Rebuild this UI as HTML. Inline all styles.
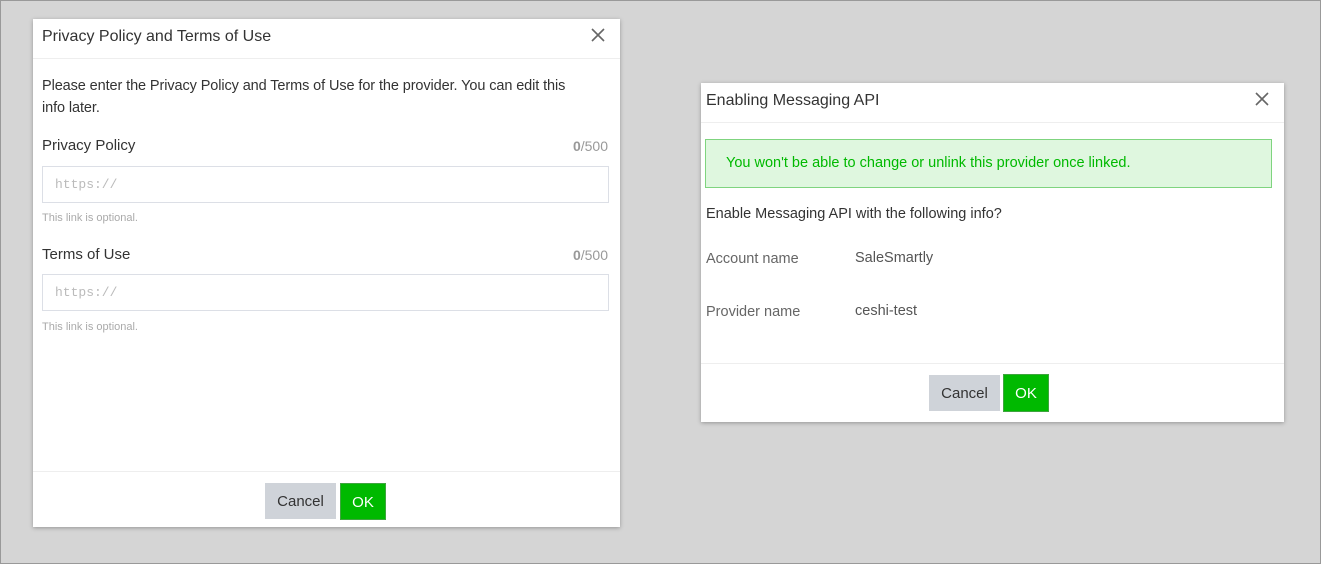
<!DOCTYPE html><html><head><style>
*{box-sizing:border-box;margin:0;padding:0}
body{width:1321px;height:564px;background:#d5d5d5;font-family:"Liberation Sans",sans-serif;position:relative;overflow:hidden;box-shadow:inset 0 0 0 1px #999;}
.dlg{position:absolute;background:#fff;box-shadow:0 1px 4px rgba(0,0,0,.3)}
.hd{height:40px;border-bottom:1px solid #eee;font-size:16px;color:#333;padding:8px 9px;position:relative}
.x{position:absolute;right:14px;top:8px;width:16px;height:16px}
.ab{position:absolute}
.btn{position:absolute;height:36px;font-size:15px;line-height:38px;text-align:center}
.c{background:#cfd3d9;color:#333;width:71px}
.o{background:#00b900;color:#fff;width:46px;border:1px solid #3ea53e}
input{position:absolute;height:37px;border:1px solid #dcdfe6;font-family:"Liberation Mono",monospace;font-size:13px;color:#bbb;padding-left:12px}
.lbl{font-size:15px;color:#333}
.cnt{font-size:14px;color:#999}
.hint{font-size:11px;color:#aaa}
</style></head><body>
<div class="dlg" style="left:33px;top:19px;width:587px;height:508px">
<div class="hd" style="height:40px;padding-top:9px">Privacy Policy and Terms of Use<svg class="x" viewBox="0 0 16 16"><path d="M2 2L14 14M14 2L2 14" stroke="#666" stroke-width="1.6"/></svg></div>
<div class="ab lbl" style="left:9px;top:56px;width:530px;line-height:22px;font-size:14.5px;letter-spacing:-0.1px">Please enter the Privacy Policy and Terms of Use for the provider. You can edit this info later.</div>
<div class="ab lbl" style="left:9px;top:118px">Privacy Policy</div>
<div class="ab cnt" style="right:12px;top:119px"><b>0</b>/500</div>
<input style="left:9px;top:147px;width:567px" value="https://">
<div class="ab hint" style="left:9px;top:193px">This link is optional.</div>
<div class="ab lbl" style="left:9px;top:227px">Terms of Use</div>
<div class="ab cnt" style="right:12px;top:228px"><b>0</b>/500</div>
<input style="left:9px;top:255px;width:567px" value="https://">
<div class="ab hint" style="left:9px;top:302px">This link is optional.</div>
<div class="ab" style="left:0;right:0;top:452px;border-top:1px solid #eee"></div>
<div class="btn c" style="left:232px;top:464px">Cancel</div>
<div class="btn o" style="left:307px;top:464px;height:37px">OK</div>
</div>
<div class="dlg" style="left:701px;top:83px;width:583px;height:339px">
<div class="hd" style="padding-top:9px;padding-left:5px">Enabling Messaging API<svg class="x" viewBox="0 0 16 16"><path d="M2 2L14 14M14 2L2 14" stroke="#666" stroke-width="1.6"/></svg></div>
<div class="ab" style="left:4px;top:56px;width:567px;height:49px;background:#dff7df;border:1px solid #7fd47f;color:#00b900;font-size:14.5px;line-height:47px;padding-left:20px">You won't be able to change or unlink this provider once linked.</div>
<div class="ab lbl" style="left:5px;top:123px;font-size:14.5px">Enable Messaging API with the following info?</div>
<div class="ab lbl" style="left:5px;top:168px;color:#666;font-size:14.5px">Account name</div>
<div class="ab lbl" style="left:154px;top:167px;color:#555;font-size:14.5px">SaleSmartly</div>
<div class="ab lbl" style="left:5px;top:221px;color:#666;font-size:14.5px">Provider name</div>
<div class="ab lbl" style="left:154px;top:220px;color:#555;font-size:14.5px">ceshi-test</div>
<div class="ab" style="left:0;right:0;top:280px;border-top:1px solid #eee"></div>
<div class="btn c" style="left:228px;top:292px">Cancel</div>
<div class="btn o" style="left:302px;top:291px;height:38px;line-height:38px;width:46px">OK</div>
</div>
</body></html>
